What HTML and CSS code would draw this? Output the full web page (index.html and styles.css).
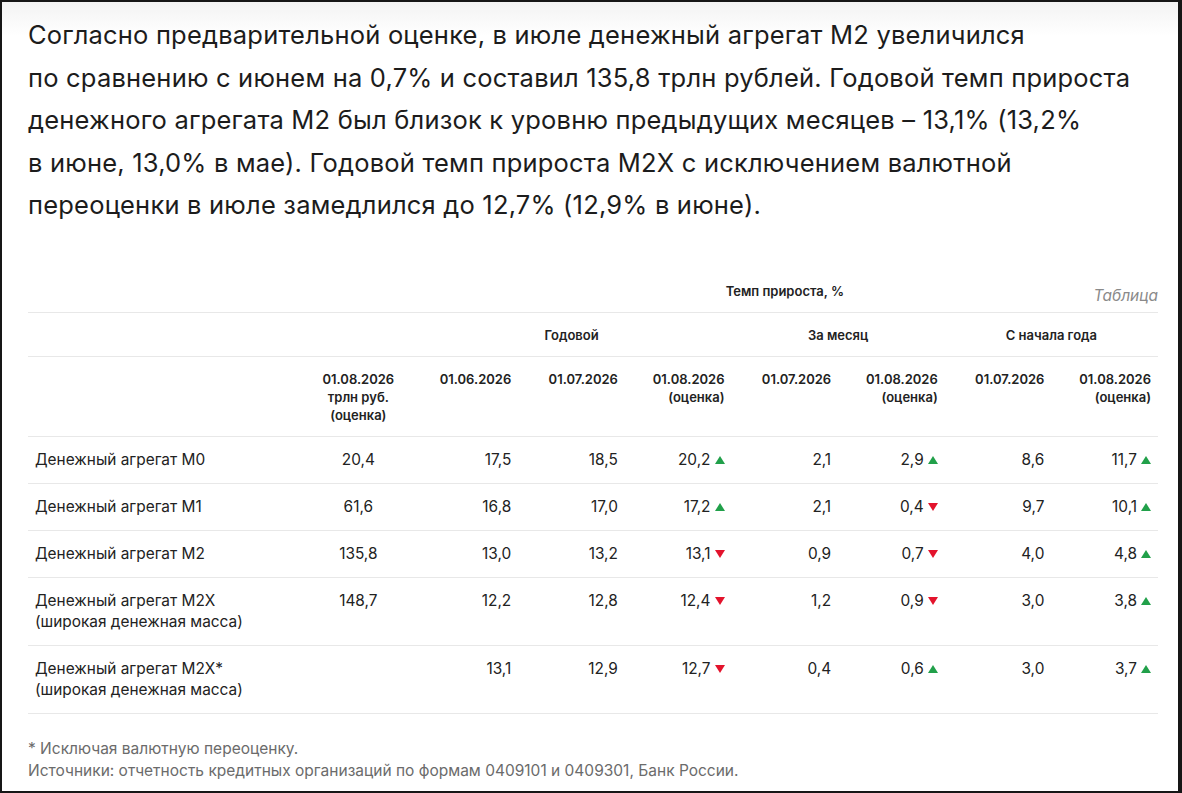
FILE: index.html
```html
<!DOCTYPE html>
<html lang="ru">
<head>
<meta charset="utf-8">
<link rel="stylesheet" href="styles.css">
</head>
<body>
<div class="frame">
  <p class="lead">Согласно предварительной оценке, в&nbsp;июле денежный агрегат М2 увеличился<br>по&nbsp;сравнению с&nbsp;июнем на&nbsp;0,7% и&nbsp;составил 135,8 трлн рублей. Годовой темп прироста<br>денежного агрегата М2 был близок к&nbsp;уровню предыдущих месяцев – 13,1% (13,2%<br>в&nbsp;июне, 13,0% в&nbsp;мае). Годовой темп прироста М2Х с&nbsp;исключением валютной<br>переоценки в&nbsp;июле замедлился до&nbsp;12,7% (12,9% в&nbsp;июне).</p>

  <div class="table-wrap">
    <span class="caption">Таблица</span>
    <table class="data">
      <colgroup>
        <col class="c-label"><col><col><col><col><col><col><col><col>
      </colgroup>
      <thead>
        <tr>
          <th colspan="2"></th>
          <th colspan="7" class="center">Темп прироста, %</th>
        </tr>
        <tr>
          <th colspan="2"></th>
          <th colspan="3" class="center">Годовой</th>
          <th colspan="2" class="center">За месяц</th>
          <th colspan="2" class="center">С начала года</th>
        </tr>
        <tr class="dates">
          <th></th>
          <th class="center">01.08.2026<br>трлн руб.<br>(оценка)</th>
          <th>01.06.2026</th>
          <th>01.07.2026</th>
          <th>01.08.2026<br>(оценка)</th>
          <th>01.07.2026</th>
          <th>01.08.2026<br>(оценка)</th>
          <th>01.07.2026</th>
          <th>01.08.2026<br>(оценка)</th>
        </tr>
      </thead>
      <tbody>
        <tr>
          <td class="label">Денежный агрегат М0</td>
          <td class="center">20,4</td>
          <td>17,5</td><td>18,5</td>
          <td>20,2<span class="tri up"></span></td>
          <td>2,1</td>
          <td>2,9<span class="tri up"></span></td>
          <td>8,6</td>
          <td>11,7<span class="tri up"></span></td>
        </tr>
        <tr>
          <td class="label">Денежный агрегат М1</td>
          <td class="center">61,6</td>
          <td>16,8</td><td>17,0</td>
          <td>17,2<span class="tri up"></span></td>
          <td>2,1</td>
          <td>0,4<span class="tri down"></span></td>
          <td>9,7</td>
          <td>10,1<span class="tri up"></span></td>
        </tr>
        <tr>
          <td class="label">Денежный агрегат М2</td>
          <td class="center">135,8</td>
          <td>13,0</td><td>13,2</td>
          <td>13,1<span class="tri down"></span></td>
          <td>0,9</td>
          <td>0,7<span class="tri down"></span></td>
          <td>4,0</td>
          <td>4,8<span class="tri up"></span></td>
        </tr>
        <tr>
          <td class="label">Денежный агрегат М2Х<br>(широкая денежная масса)</td>
          <td class="center">148,7</td>
          <td>12,2</td><td>12,8</td>
          <td>12,4<span class="tri down"></span></td>
          <td>1,2</td>
          <td>0,9<span class="tri down"></span></td>
          <td>3,0</td>
          <td>3,8<span class="tri up"></span></td>
        </tr>
        <tr>
          <td class="label">Денежный агрегат М2Х*<br>(широкая денежная масса)</td>
          <td class="center"></td>
          <td>13,1</td><td>12,9</td>
          <td>12,7<span class="tri down"></span></td>
          <td>0,4</td>
          <td>0,6<span class="tri up"></span></td>
          <td>3,0</td>
          <td>3,7<span class="tri up"></span></td>
        </tr>
      </tbody>
    </table>
  </div>

  <div class="notes">
    <p>* Исключая валютную переоценку.</p>
    <p>Источники: отчетность кредитных организаций по&nbsp;формам 0409101 и&nbsp;0409301, Банк России.</p>
  </div>
</div>
</body>
</html>
```

FILE: styles.css
```css
html, body {
  margin: 0;
  padding: 0;
  background: #ffffff;
}

.frame {
  box-sizing: border-box;
  width: 1182px;
  height: 793px;
  border: 2px solid #161616;
  border-right-width: 4px;
  background: linear-gradient(#f3f3f3 0px, #ffffff 34px);
  padding: 12px 20px 0 26px;
  font-family: Inter, "Noto Sans", sans-serif;
  color: #1f1f1f;
  overflow: hidden;
}

.lead {
  margin: 0 0 42px 0;
  font-size: 25.5px;
  line-height: 42.5px;
  letter-spacing: 0.2px;
  white-space: nowrap;
  color: #1c1c1c;
}

.table-wrap {
  position: relative;
}

.caption {
  position: absolute;
  top: 17px;
  right: 0;
  font-size: 15.5px;
  line-height: 20px;
  font-style: italic;
  color: #8a8a8a;
}

.data {
  width: 1130px;
  table-layout: fixed;
  border-collapse: collapse;
}

.c-label {
  width: 277px;
}

.data th {
  font-size: 13px;
  line-height: 18px;
  font-weight: 600;
  color: #222;
  padding: 13px 7px 12px;
  text-align: right;
  vertical-align: top;
  border-bottom: 1px solid #e8e8e8;
}

.data td {
  font-size: 15.4px;
  line-height: 21px;
  padding: 12.5px 7px;
  text-align: right;
  vertical-align: top;
  color: #222;
  border-bottom: 1px solid #e8e8e8;
}

.data .center {
  text-align: center;
}

.data td.label {
  text-align: left;
  padding-left: 7px;
}

.tri {
  display: inline-block;
  width: 0;
  height: 0;
  margin-left: 4px;
  border-left: 5.5px solid transparent;
  border-right: 5.5px solid transparent;
  vertical-align: 1px;
}

.tri.up {
  border-bottom: 8px solid #21a04a;
}

.tri.down {
  border-top: 8px solid #e3132c;
}

.notes {
  margin-top: 24px;
}

.notes p {
  margin: 0;
  font-size: 15.5px;
  line-height: 22px;
  color: #6b6b6b;
}
```
